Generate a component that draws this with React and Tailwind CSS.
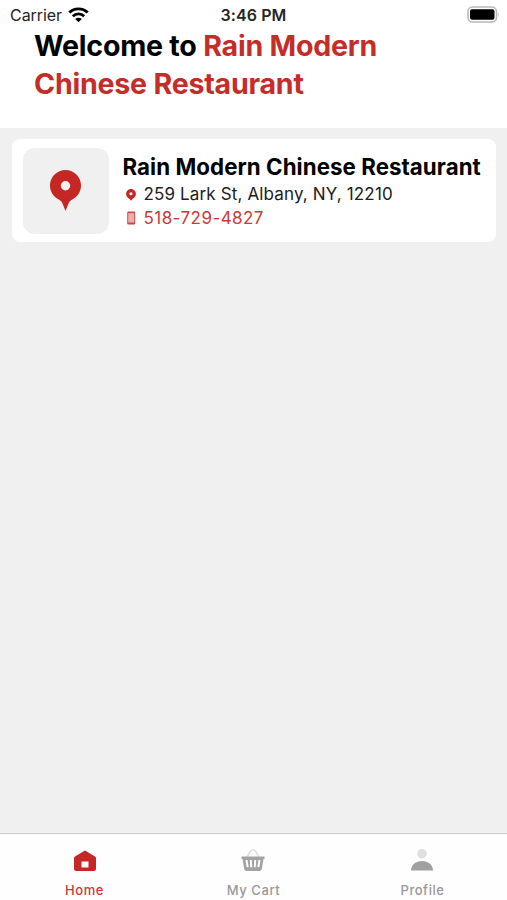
const PIN = "M15.500 0C6.900 0 0 6.900 0 15.500C0 22.500 4 27 9.500 30Q11.500 31 12.300 33L15.500 41L18.700 33Q19.500 31 21.500 30C27 27 31 22.500 31 15.500C31 6.900 24.100 0 15.500 0ZM15.500 11.100A4.700 4.700 0 1 1 15.500 20.500A4.700 4.700 0 1 1 15.500 11.100Z";

function StatusBar() {
  return (
    <div className="flex h-[27px] items-center pt-[3px] text-[16px] leading-[20px] text-[#242424]">
      <div className="flex w-[210px] items-center pl-[10px]">
        <span className="tracking-[-0.05px]">Carrier</span>
        <svg className="mt-[-1px] ml-[6px] h-[16px] w-[21px]" viewBox="0 0 21 16" fill="none" stroke="#000">
          <path d="M1.300 5.600C6.400 .6 14.600 .6 19.700 5.600" strokeWidth="2.800" />
          <path d="M4.800 9.200C8 6.100 13 6.100 16.200 9.200" strokeWidth="2.700" />
          <path d="M7.200 12C9.100 10.200 11.900 10.200 13.800 12L10.500 15.300Z" fill="#000" stroke="none" />
        </svg>
      </div>
      <div className="w-[87px] text-center font-semibold tracking-[0.1px] whitespace-nowrap">3:46 PM</div>
      <div className="flex flex-1 justify-end pr-[7px]">
        <svg className="mt-[-2px] h-[17px] w-[33px]" viewBox="0 0 33 17">
          <rect x="1" y="1" width="28.500" height="15" rx="4.500" fill="#fff" stroke="#b9b9b9" strokeWidth="1.600" />
          <rect x="3" y="3.300" width="24.500" height="10.400" rx="2" fill="#000" />
          <path d="M31 6.300Q32.800 8.500 31 10.700Z" fill="#aaa" />
        </svg>
      </div>
    </div>
  );
}

function RestaurantCard() {
  return (
    <div className="mx-[12px] mr-[11px] flex h-[103px] rounded-[8px] bg-white pt-[8.5px] pl-[10.5px]">
      <div className="flex h-[86px] w-[86px] shrink-0 items-center justify-center rounded-[12px] bg-[#f0f0f0]">
        <svg className="mt-[-1px] h-[41px] w-[31px]" viewBox="0 0 31 41">
          <path d={PIN} fill="#c42724" fillRule="evenodd" />
        </svg>
      </div>
      <div className="ml-[14px] pt-[4px] whitespace-nowrap">
        <div className="mb-[2px] text-[22.3px] leading-[29px] font-bold tracking-[0.06px] text-black">Rain Modern Chinese Restaurant</div>
        <div className="flex h-[24px] items-center text-[17px] tracking-[0.14px] text-[#202020]">
          <svg className="mr-[8px] ml-[3px] h-[12px] w-[10px]" viewBox="0 0 31 38">
            <path d="M15.500 0C6.900 0 0 6.900 0 15.500C0 24 7 29 11 31.500L15.500 37L20 31.500C24 29 31 24 31 15.500C31 6.900 24.100 0 15.500 0ZM15.500 10A5 5 0 1 1 15.500 20A5 5 0 1 1 15.500 10Z" fill="#c42724" fillRule="evenodd" />
          </svg>
          <span>259 Lark St, Albany, NY, 12210</span>
        </div>
        <div className="flex h-[24px] items-center text-[17px] tracking-[0.45px] text-[#c83a37]">
          <svg className="mt-[-2px] mr-[8px] ml-[3px] h-[14px] w-[10px]" viewBox="0 0 10 14">
            <rect x="1.200" y=".5" width="8" height="13" rx="1.200" fill="#cc4b49" />
            <rect x="2.200" y="2.200" width="6" height="9.300" fill="#efadac" />
          </svg>
          <span>518-729-4827</span>
        </div>
      </div>
    </div>
  );
}

function HomeIcon() {
  return (
    <svg className="h-[22px] w-[24px]" viewBox="0 0 24 22">
      <path d="M12 .5L22 6.500Q23 7.200 23 8.500V18.500Q23 21 20.500 21H3.500Q1 21 1 18.500V8.500Q1 7.200 2 6.500ZM8.500 11.500V17.500H15.500V11.500Z" fill="#c42724" fillRule="evenodd" />
    </svg>
  );
}

function CartIcon() {
  return (
    <svg className="mr-[2px] h-[24px] w-[24px]" viewBox="0 0 24 24">
      <path d="M6 9L9.500 3.300Q12 .2 14.500 3.300L18 9" fill="none" stroke="#dedede" strokeWidth="1.500" />
      <path d="M.5 8.500H23.500V11H22.500L20.800 21Q20.500 23 18.500 23H5.500Q3.500 23 3.200 21L1.500 11H.5Z" fill="#a3a3a3" />
      <path d="M5.500 12L6.700 19.200M9.800 12L10.200 19.200M14.200 12L13.800 19.200M18.500 12L17.300 19.200" stroke="#fff" strokeWidth="2" />
    </svg>
  );
}

function ProfileIcon() {
  return (
    <svg className="mr-[1px] mb-[1px] h-[22px] w-[22px]" viewBox="0 0 22 22">
      <circle cx="11" cy="4.800" r="4.700" fill="#dedede" />
      <path d="M0 21.500C.2 15.500 5 12 11 12S21.800 15.500 22 21.500Z" fill="#a0a0a0" />
    </svg>
  );
}

function Tab({ icon, label, color }) {
  return (
    <div className={"flex flex-1 flex-col items-center pt-[13px] " + color}>
      <div className="flex h-[25px] items-end">{icon}</div>
      <div className="mt-[9px] text-[13px] leading-[18px] font-medium tracking-[0.55px]">{label}</div>
    </div>
  );
}

export default function App() {
  return (
    <div className="flex h-[900px] w-[507px] flex-col overflow-hidden bg-[#f0f0f0] font-[Inter,sans-serif]">
      <header className="h-[128px] bg-white">
        <StatusBar />
        <h1 className="pl-[34px] text-[28.6px] leading-[38px] font-bold tracking-[-0.24px] text-black">
          Welcome to <span className="text-[#c42d29]">Rain Modern<br />Chinese Restaurant</span>
        </h1>
      </header>
      <main className="flex-1 pt-[11px]">
        <RestaurantCard />
      </main>
      <nav className="flex h-[67px] border-t border-[#c9c9c9] bg-[#fefefe]">
        <Tab icon={<HomeIcon />} label="Home" color="text-[#c83a37]" />
        <Tab icon={<CartIcon />} label="My Cart" color="text-[#989898]" />
        <Tab icon={<ProfileIcon />} label="Profile" color="text-[#989898]" />
      </nav>
    </div>
  );
}
